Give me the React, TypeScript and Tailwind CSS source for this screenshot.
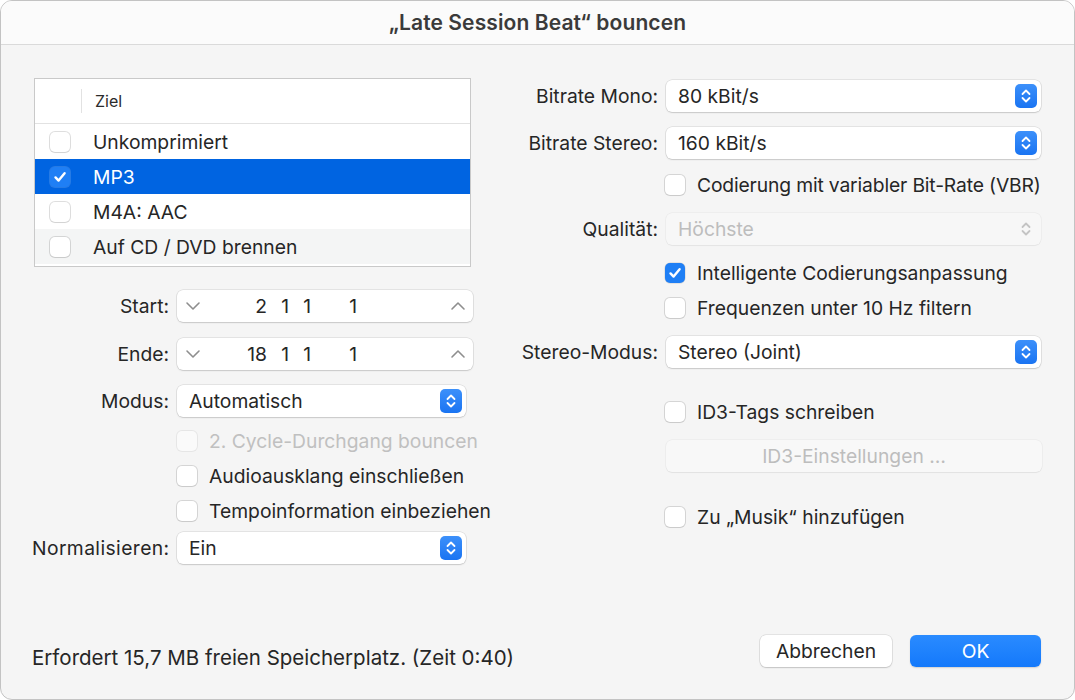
import React from 'react';
import { clsx } from 'clsx';

const FONT = "font-['Inter','Noto_Sans',sans-serif]";

// macOS style checkbox
const Check: React.FC<{ checked?: boolean; disabled?: boolean; inverted?: boolean }> = ({
  checked,
  disabled,
  inverted,
}) => (
  <div
    className={clsx(
      'w-[20px] h-[20px] rounded-[5px] flex items-center justify-center shrink-0',
      checked
        ? inverted
          ? 'bg-[#1f7ff5] shadow-[0_0_0_1px_rgba(255,255,255,0.15)]'
          : 'bg-[#1f7ff5] shadow-[0_0_0_0.5px_rgba(0,0,0,0.15)]'
        : disabled
        ? 'bg-[#fafafa] shadow-[0_0_0_1px_rgba(0,0,0,0.06)]'
        : 'bg-white shadow-[0_0_0_1px_rgba(0,0,0,0.13),0_1px_1px_rgba(0,0,0,0.05)]'
    )}
  >
    {checked && (
      <svg width="14" height="14" viewBox="0 0 14 14">
        <path d="M2.5 7.4 L5.6 10.6 L11.6 3.2" fill="none" stroke="white" strokeWidth="2.4" strokeLinecap="round" strokeLinejoin="round" />
      </svg>
    )}
  </div>
);

const Stepper: React.FC<{ disabled?: boolean }> = ({ disabled }) => (
  <div
    className={clsx(
      'w-[22px] h-[24px] rounded-[5px] flex items-center justify-center',
      disabled ? '' : 'bg-[linear-gradient(#3c90fa,#1a74f2)]'
    )}
  >
    <svg width="12" height="16" viewBox="0 0 12 16">
      <path
        d="M2.5 6 L6 2.5 L9.5 6 M2.5 10 L6 13.5 L9.5 10"
        fill="none"
        stroke={disabled ? '#c4c4c4' : 'white'}
        strokeWidth="1.8"
        strokeLinecap="round"
        strokeLinejoin="round"
      />
    </svg>
  </div>
);

const Popup: React.FC<{ value: string; width: string; disabled?: boolean }> = ({ value, width, disabled }) => (
  <div
    className={clsx(
      'h-[32px] rounded-[6px] flex items-center justify-between pl-[12px] pr-[4px] shrink-0',
      width,
      disabled
        ? 'bg-[#f7f7f7] shadow-[0_0_0_0.5px_rgba(0,0,0,0.06),0_1px_1px_rgba(0,0,0,0.04)] text-[#bdbdbd]'
        : 'bg-white shadow-[0_0_0_0.5px_rgba(0,0,0,0.14),0_1px_1.5px_rgba(0,0,0,0.12)] text-[#262626]'
    )}
  >
    <span>{value}</span>
    <Stepper disabled={disabled} />
  </div>
);

const Chevron: React.FC<{ up?: boolean }> = ({ up }) => (
  <svg width="16" height="10" viewBox="0 0 16 10">
    <path
      d={up ? 'M2 8 L8 2 L14 8' : 'M2 2 L8 8 L14 2'}
      fill="none"
      stroke="#8e8e8e"
      strokeWidth="1.6"
      strokeLinecap="round"
      strokeLinejoin="round"
    />
  </svg>
);

const PositionField: React.FC<{ bar: string }> = ({ bar }) => (
  <div className="w-[296px] h-[32px] shrink-0 rounded-[6px] bg-white shadow-[0_0_0_0.5px_rgba(0,0,0,0.14),0_1px_1.5px_rgba(0,0,0,0.12)] flex items-center pl-[8px] pr-[7px] text-[#262626]">
    <Chevron />
    <div className="flex-1 flex items-center">
      <span className="w-[66px] text-right">{bar}</span>
      <span className="w-[22px] text-right">1</span>
      <span className="w-[22px] text-right">1</span>
      <span className="w-[46px] text-right">1</span>
    </div>
    <Chevron up />
  </div>
);

const CheckRow: React.FC<{ label: string; checked?: boolean; disabled?: boolean; className?: string }> = ({
  label,
  checked,
  disabled,
  className,
}) => (
  <div className={clsx('flex items-center gap-[12px] whitespace-nowrap', className)}>
    <Check checked={checked} disabled={disabled} />
    <span className={disabled ? 'text-[#c0c0c0]' : 'text-[#262626]'}>{label}</span>
  </div>
);

const rows = [
  { label: 'Unkomprimiert', checked: false },
  { label: 'MP3', checked: true, selected: true },
  { label: 'M4A: AAC', checked: false },
  { label: 'Auf CD / DVD brennen', checked: false, alt: true },
];

export default function App() {
  return (
    <div className={clsx('w-[1075px] h-[700px] bg-white text-[19.3px] leading-[26px]', FONT)}>
      <div className="w-full h-full rounded-[12px] border border-[#c3c3c3] bg-[#f5f5f5] overflow-hidden flex flex-col">
        {/* Title bar */}
        <div className="h-[44px] shrink-0 bg-[#fbfbfb] border-b border-[#dadada] flex items-center justify-center">
          <span className="text-[21px] font-semibold text-[#3a3a3a] tracking-[0.1px]">„Late Session Beat“ bouncen</span>
        </div>

        {/* Body */}
        <div className="flex-1 flex pl-[31px]">
          {/* Left column */}
          <div className="w-[442px] shrink-0 pt-[33px]">
            <div className="w-[437px] h-[189px] ml-[2px] border border-[#c9c9c9] bg-white">
              <div className="h-[45px] border-b border-[#e2e2e2] flex items-center">
                <div className="w-[47px] h-[24px] border-r border-[#e2e2e2]" />
                <span className="pl-[13px] text-[16px] text-[#2b2b2b]">Ziel</span>
              </div>
              {rows.map((r) => (
                <div
                  key={r.label}
                  className={clsx(
                    'h-[35px] flex items-center pl-[15px] gap-[23px]',
                    r.selected ? 'bg-[#0064e1] text-white' : r.alt ? 'bg-[#f4f5f5] text-[#262626]' : 'text-[#262626]'
                  )}
                >
                  <Check checked={r.checked} inverted={r.selected} />
                  <span>{r.label}</span>
                </div>
              ))}
            </div>

            <div className="flex items-center mt-[23px]">
              <span className="w-[145px] shrink-0 text-right pr-[8px] text-[#262626]">Start:</span>
              <PositionField bar="2" />
            </div>
            <div className="flex items-center mt-[16px]">
              <span className="w-[145px] shrink-0 text-right pr-[8px] text-[#262626]">Ende:</span>
              <PositionField bar="18" />
            </div>
            <div className="flex items-center mt-[15px]">
              <span className="w-[145px] shrink-0 text-right pr-[8px] text-[#262626]">Modus:</span>
              <Popup value="Automatisch" width="w-[289px]" />
            </div>
            <div className="pl-[145px]">
              <CheckRow label="2. Cycle-Durchgang bouncen" disabled className="h-[35px] mt-[6px]" />
              <CheckRow label="Audioausklang einschließen" className="h-[35px]" />
              <CheckRow label="Tempoinformation einbeziehen" className="h-[35px]" />
            </div>
            <div className="flex items-center mt-[4px]">
              <span className="w-[145px] shrink-0 text-right pr-[8px] text-[#262626] whitespace-nowrap tracking-[0.4px]">Normalisieren:</span>
              <Popup value="Ein" width="w-[289px]" />
            </div>
          </div>

          {/* Right column */}
          <div className="flex-1 pt-[35px]">
            <div className="flex items-center">
              <span className="w-[192px] shrink-0 text-right pr-[8px] text-[#262626]">Bitrate Mono:</span>
              <Popup value="80 kBit/s" width="w-[375px]" />
            </div>
            <div className="flex items-center mt-[15px]">
              <span className="w-[192px] shrink-0 text-right pr-[8px] text-[#262626]">Bitrate Stereo:</span>
              <Popup value="160 kBit/s" width="w-[375px]" />
            </div>
            <div className="pl-[191px]">
              <CheckRow label="Codierung mit variabler Bit-Rate (VBR)" className="h-[34px] mt-[9px] tracking-[-0.15px]" />
            </div>
            <div className="flex items-center mt-[11px]">
              <span className="w-[192px] shrink-0 text-right pr-[8px] text-[#262626]">Qualität:</span>
              <Popup value="Höchste" width="w-[375px]" disabled />
            </div>
            <div className="pl-[191px]">
              <CheckRow label="Intelligente Codierungsanpassung" checked className="h-[35px] mt-[10px]" />
              <CheckRow label="Frequenzen unter 10 Hz filtern" className="h-[35px]" />
            </div>
            <div className="flex items-center mt-[11px]">
              <span className="w-[192px] shrink-0 text-right pr-[8px] text-[#262626]">Stereo-Modus:</span>
              <Popup value="Stereo (Joint)" width="w-[375px]" />
            </div>
            <div className="pl-[191px]">
              <CheckRow label="ID3-Tags schreiben" className="h-[34px] mt-[27px]" />
              <div className="w-[376px] h-[32px] mt-[11px] ml-[1px] rounded-[6px] bg-[#f8f8f8] shadow-[0_0_0_0.5px_rgba(0,0,0,0.06),0_1px_1px_rgba(0,0,0,0.05)] flex items-center justify-center text-[#bdbdbd]">
                ID3-Einstellungen …
              </div>
              <CheckRow label="Zu „Musik“ hinzufügen" className="h-[34px] mt-[28px]" />
            </div>
          </div>
        </div>

        {/* Footer */}
        <div className="h-[64px] shrink-0 flex items-start justify-between pl-[31px] pr-[33px]">
          <span className="mt-[9px] text-[20.5px] leading-[28px] text-[#262626]">Erfordert 15,7 MB freien Speicherplatz. (Zeit 0:40)</span>
          <div className="flex gap-[18px]">
            <button className="w-[132px] h-[32px] rounded-[6px] bg-white shadow-[0_0_0_0.5px_rgba(0,0,0,0.14),0_1px_1.5px_rgba(0,0,0,0.14)] text-[#262626]">
              Abbrechen
            </button>
            <button className="w-[131px] h-[32px] rounded-[6px] bg-[linear-gradient(#2a8bff,#1479fb)] shadow-[0_1px_1.5px_rgba(0,0,0,0.15)] text-white">
              OK
            </button>
          </div>
        </div>
      </div>
    </div>
  );
}
